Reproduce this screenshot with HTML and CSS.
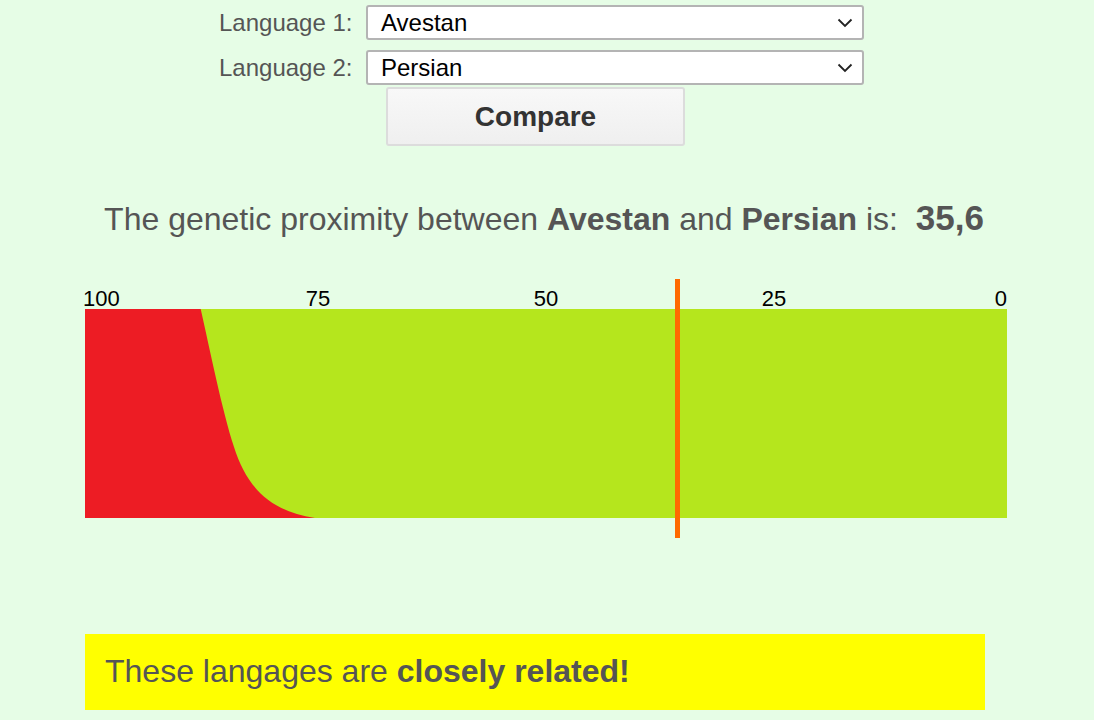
FILE: index.html
```html
<!DOCTYPE html>
<html lang="en">
<head>
  <meta charset="UTF-8">
  <meta name="viewport" content="width=device-width, initial-scale=1.0">
  <title>Genetic Proximity Calculator</title>
  <link rel="stylesheet" href="styles.css">
</head>
<body>
  <form id="compare-form">
    <div class="form-row">
      <label for="lang1">Language 1:</label>
      <div class="select-box">
        <span id="lang1">Avestan</span>
        <svg class="chevron" width="16" height="10" viewBox="0 0 16 10"><path d="M1.5 1.5 L8 8 L14.5 1.5" fill="none" stroke="#222" stroke-width="1.8"/></svg>
      </div>
    </div>
    <div class="form-row">
      <label for="lang2">Language 2:</label>
      <div class="select-box">
        <span id="lang2">Persian</span>
        <svg class="chevron" width="16" height="10" viewBox="0 0 16 10"><path d="M1.5 1.5 L8 8 L14.5 1.5" fill="none" stroke="#222" stroke-width="1.8"/></svg>
      </div>
    </div>
    <button type="button" id="compare-button">Compare</button>
  </form>

  <p class="result-line">
    The genetic proximity between <b>Avestan</b> and <b>Persian</b> is:&nbsp; <b class="score">35,6</b>
  </p>

  <!-- scale runs from 100 (left) to 0 (right), marker at the score -->
  <svg class="scale" width="940" height="270" viewBox="0 0 940 270">
    <text x="3" y="31" text-anchor="start">100</text>
    <text x="238" y="31" text-anchor="middle">75</text>
    <text x="466" y="31" text-anchor="middle">50</text>
    <text x="694" y="31" text-anchor="middle">25</text>
    <text x="927" y="31" text-anchor="end">0</text>
    <rect x="5" y="34" width="922" height="209" fill="#b5e61d"/>
    <path d="M5,34 L120.7,34 C130,75 142,135 154,172 C166,210 188,236 235,243 L5,243 Z" fill="#ed1c24"/>
    <rect x="595" y="4" width="5" height="259" fill="#ff6a00"/>
  </svg>

  <div class="verdict">
    These langages are <b>closely related!</b>
  </div>
</body>
</html>
```

FILE: styles.css
```css
body {
  margin: 0;
  background-color: #e6fde6;
  color: #555555;
  font-family: "Liberation Sans", Arial, sans-serif;
}

#compare-form {
  margin-left: 219px;
  padding-top: 5px;
}

.form-row {
  display: flex;
  align-items: center;
  gap: 15px;
  margin-bottom: 10px;
}

.form-row label {
  width: 132px;
  text-align: right;
  font-size: 24px;
  white-space: nowrap;
  color: #555;
}

.select-box {
  box-sizing: border-box;
  width: 498px;
  height: 35px;
  display: flex;
  align-items: center;
  justify-content: space-between;
  padding: 0 9px 0 13px;
  background-color: #ffffff;
  border: 2px solid #b4b4b4;
  border-radius: 3px;
  font-size: 24px;
  color: #000;
}

#compare-button {
  display: block;
  box-sizing: border-box;
  width: 299px;
  height: 59px;
  margin: -8px 0 0 167px;
  background: linear-gradient(#f8f8f8, #efefef);
  border: 2px solid #dcdcdc;
  border-radius: 3px;
  font-family: "Liberation Sans", Arial, sans-serif;
  font-size: 28px;
  font-weight: bold;
  color: #333;
  cursor: pointer;
}

.result-line {
  margin: 52px 0 0;
  text-align: center;
  font-size: 32px;
  padding-right: 6px;
}

.score {
  font-size: 35px;
}

.scale {
  display: block;
  margin: 37px 0 0 80px;
  font-family: "Liberation Sans", Arial, sans-serif;
  font-size: 22px;
  fill: #000;
}

.verdict {
  box-sizing: border-box;
  width: 900px;
  height: 76px;
  margin: 89px 0 0 85px;
  padding: 19px 20px;
  background-color: #ffff00;
  font-size: 32px;
}
```
